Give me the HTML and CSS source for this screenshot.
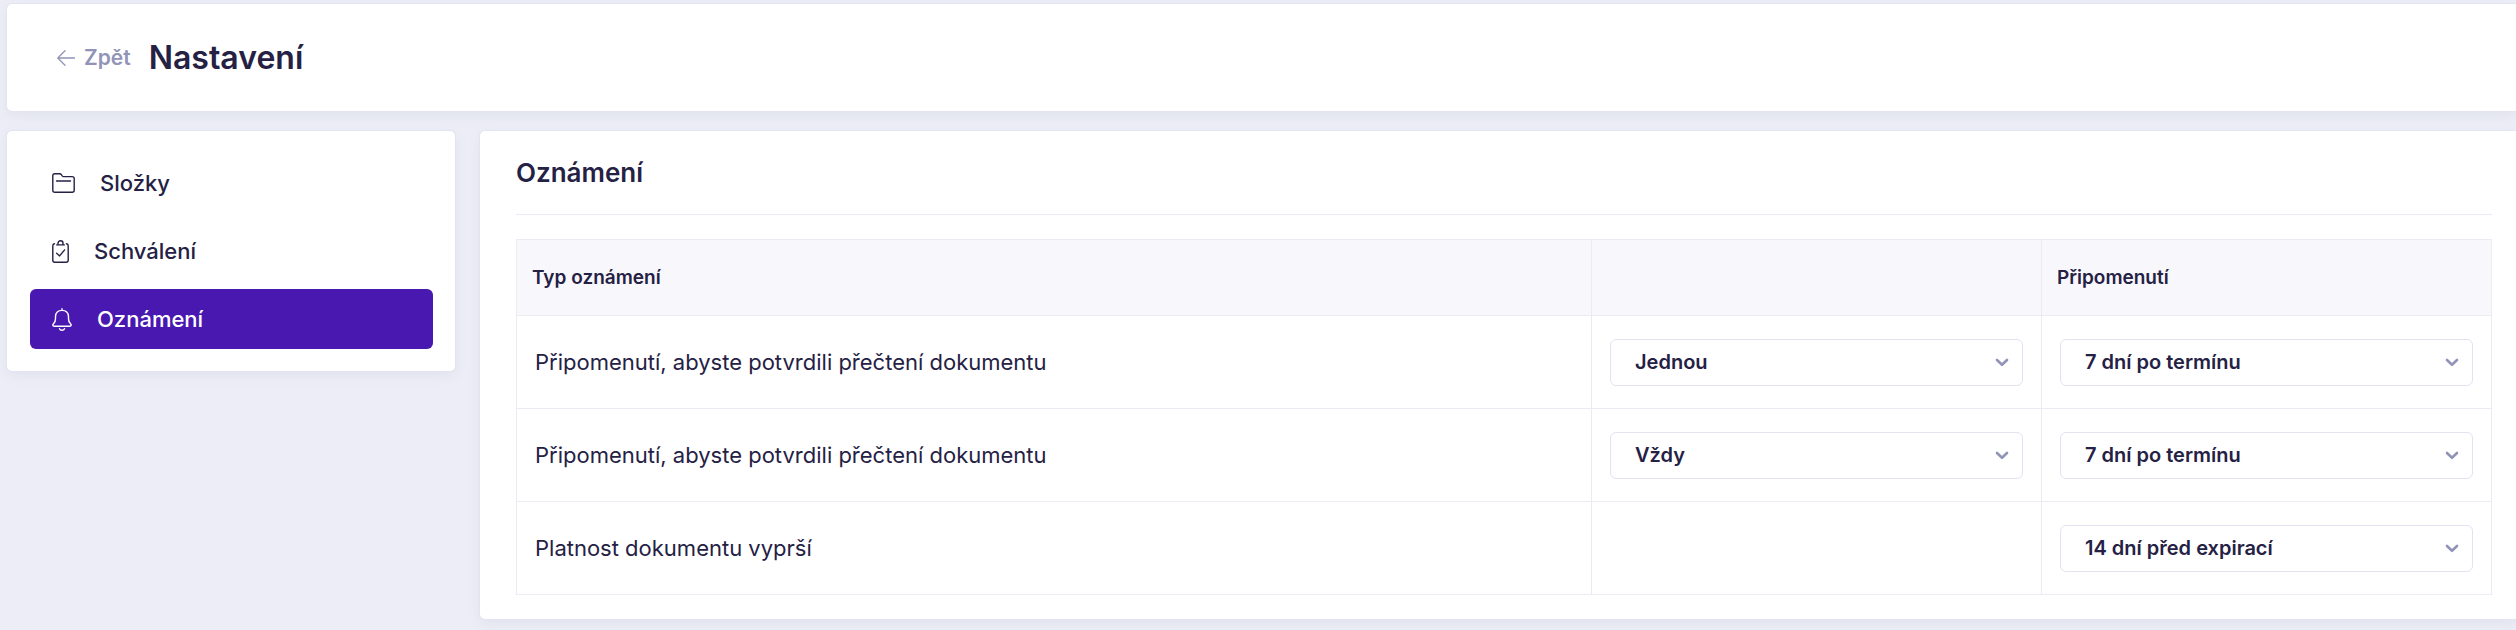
FILE: index.html
```html
<!DOCTYPE html>
<html lang="cs">
<head>
<meta charset="utf-8">
<meta name="viewport" content="width=device-width, initial-scale=1">
<title>Nastavení</title>
<link rel="stylesheet" href="styles.css">
</head>
<body>
<svg class="defs" aria-hidden="true">
  <symbol id="chevron" viewBox="0 0 14 9">
    <path d="M2 2l5 4.8L12 2" fill="none" stroke="currentColor" stroke-width="2.6" stroke-linecap="round" stroke-linejoin="round"/>
  </symbol>
</svg>
<div class="page">
  <header class="card header">
    <a class="back" href="#">
      <svg width="18" height="16" viewBox="0 0 18 16" aria-hidden="true"><path d="M17.5 8H1M8 .8L.8 8 8 15.2" fill="none" stroke="currentColor" stroke-width="1.3" stroke-linecap="round" stroke-linejoin="round"/></svg>
      <span>Zpět</span>
    </a>
    <h1 class="page-title">Nastavení</h1>
  </header>
  <div class="columns">
    <nav class="card sidebar" aria-label="Nastavení">
      <a class="nav-item" href="#">
        <svg width="23" height="20" viewBox="0 0 23 20" aria-hidden="true"><g fill="none" stroke="currentColor" stroke-width="1.4" stroke-linecap="round" stroke-linejoin="round"><path d="M.8 17.2V2.8Q.8.8 2.8.8H7.600q1.200 0 1.900 1l.7 1q.6.800 1.600.8h8.400q2 0 2 2v11.600q0 2-2 2H2.800q-2 0-2-2z"/><path d="M4.500 8h14"/></g></svg>
        <span>Složky</span>
      </a>
      <a class="nav-item" href="#">
        <svg width="17" height="23" viewBox="0 0 17 23" aria-hidden="true"><g fill="none" stroke="currentColor" stroke-width="1.400" stroke-linecap="round" stroke-linejoin="round"><path d="M2.500 3.700Q.8 3.900.8 5.800v14.400q0 2 2 2h11.400q2 0 2-2V5.800q0-1.900-1.700-2.100"/><path d="M4.700 4.900h7.600M6 4.700V3.200a2.500 2.400 0 0 1 5 0v1.500"/><path d="M4.600 13.200l3 2.700 5-6"/></g></svg>
        <span>Schválení</span>
      </a>
      <a class="nav-item active" href="#" aria-current="page">
        <svg width="20" height="23" viewBox="0 0 20 23" aria-hidden="true"><g fill="none" stroke="currentColor" stroke-width="1.400" stroke-linecap="round" stroke-linejoin="round"><path d="M10 .8v1.400M2 18.200h16q1.200 0 1.200-1.100 0-.7-.7-1.300-2-1.700-2-5V8.600Q16.200 2.400 10 2.400T3.500 8.600v2.200q0 3.300-2 5-.7.600-.7 1.300 0 1.100 1.200 1.100z"/><path d="M7.500 20.700q.6 1.500 2.500 1.500t2.500-1.500"/></g></svg>
        <span>Oznámení</span>
      </a>
    </nav>
    <main class="card content">
      <h2 class="section-title">Oznámení</h2>
      <table class="table">
        <colgroup>
          <col>
          <col class="col-control">
          <col class="col-control">
        </colgroup>
        <thead>
          <tr><th scope="col">Typ oznámení</th><td></td><th scope="col">Připomenutí</th></tr>
        </thead>
        <tbody>
          <tr>
            <td>Připomenutí, abyste potvrdili přečtení dokumentu</td>
            <td><div class="select"><select aria-label="Četnost"><option>Jednou</option></select><svg aria-hidden="true"><use href="#chevron"/></svg></div></td>
            <td><div class="select"><select aria-label="Připomenutí"><option>7 dní po termínu</option></select><svg aria-hidden="true"><use href="#chevron"/></svg></div></td>
          </tr>
          <tr>
            <td>Připomenutí, abyste potvrdili přečtení dokumentu</td>
            <td><div class="select"><select aria-label="Četnost"><option>Vždy</option></select><svg aria-hidden="true"><use href="#chevron"/></svg></div></td>
            <td><div class="select"><select aria-label="Připomenutí"><option>7 dní po termínu</option></select><svg aria-hidden="true"><use href="#chevron"/></svg></div></td>
          </tr>
          <tr>
            <td>Platnost dokumentu vyprší</td>
            <td></td>
            <td><div class="select"><select aria-label="Připomenutí"><option>14 dní před expirací</option></select><svg aria-hidden="true"><use href="#chevron"/></svg></div></td>
          </tr>
        </tbody>
      </table>
    </main>
  </div>
</div>
</body>
</html>
```
FILE: styles.css
```css
* {
  box-sizing: border-box;
}

body {
  margin: 0;
  background: #ecedf6;
  color: #252144;
  font-family: Inter, "Liberation Sans", sans-serif;
  font-optical-sizing: none;
  font-size: 22px;
  line-height: 28px;
}

a {
  color: inherit;
  text-decoration: none;
}

svg {
  flex: none;
}

.defs {
  display: none;
}

.page {
  padding: 4px 0 11px 7px;
}

.card {
  background: #fff;
  border-radius: 5px;
  box-shadow: 0 0 0 1px #e3e3f1, 0 4px 12px #dfe1ec;
}

.header {
  display: flex;
  align-items: center;
  gap: 18px;
  padding: 34px 50px 33px;
  border-radius: 5px 0 0 5px;
}

.back {
  display: flex;
  align-items: center;
  gap: 9px;
  color: #9194b8;
  font-size: 21px;
  font-weight: 600;
}

.page-title {
  margin: 0;
  font-size: 32px;
  font-weight: 600;
  line-height: 40px;
}

.columns {
  display: flex;
  align-items: flex-start;
  gap: 25px;
  margin-top: 20px;
}

.sidebar {
  display: flex;
  flex: none;
  flex-direction: column;
  gap: 8px;
  width: 448px;
  padding: 22px 22px 22px 23px;
}

.nav-item {
  display: flex;
  align-items: center;
  gap: 25px;
  padding: 16px 22px;
  border-radius: 6px;
  font-weight: 500;
}

.nav-item.active {
  background: #4918b0;
  color: #fff;
}

.content {
  flex: 1;
  min-width: 0;
  padding: 26px 24px 24px 36px;
  border-radius: 5px 0 0 5px;
}

.section-title {
  margin: 0 0 24px;
  padding-bottom: 25px;
  border-bottom: 1px solid #ecebf4;
  font-size: 26px;
  font-weight: 600;
  line-height: 32px;
}

.table {
  width: 100%;
  border-collapse: collapse;
  table-layout: fixed;
}

.col-control {
  width: 450px;
}

.table th,
.table td {
  padding: 0 18px;
  border: 1px solid #ecebf4;
  text-align: left;
}

.table thead tr {
  height: 76px;
  background: #f8f7fc;
}

.table tbody tr {
  height: 93px;
}

.table th {
  padding: 0 15px;
  font-size: 19px;
  font-weight: 600;
}

.select {
  display: grid;
  align-items: center;
}

.select select,
.select svg {
  grid-area: 1 / 1;
}

.select select {
  width: 100%;
  height: 47px;
  padding: 0 44px 0 24px;
  border: 1px solid #e3e2f1;
  border-radius: 6px;
  appearance: none;
  background: #fff;
  color: inherit;
  font: inherit;
  font-size: 20px;
  font-weight: 600;
}

.select svg {
  justify-self: end;
  width: 14px;
  height: 9px;
  margin-right: 14px;
  color: #9194b8;
  pointer-events: none;
}
```
